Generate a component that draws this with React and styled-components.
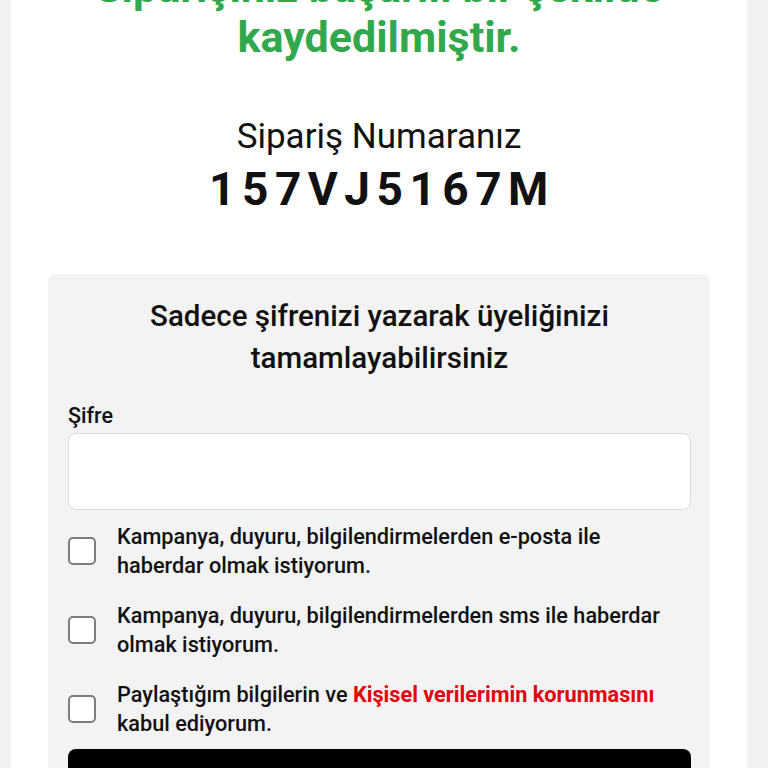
import React, { useState } from 'react';
import styled, { createGlobalStyle } from 'styled-components';

const GlobalStyle = createGlobalStyle`
  * { box-sizing: border-box; }
  body {
    margin: 0;
    background: #f2f2f2;
    font-family: Roboto, "Noto Sans", Arial, sans-serif;
    color: #111;
    overflow: hidden;
  }
`;

const consents = [
  { id: 'mail', text: 'Kampanya, duyuru, bilgilendirmelerden e-posta ile haberdar olmak istiyorum.' },
  { id: 'sms', text: 'Kampanya, duyuru, bilgilendirmelerden sms ile haberdar olmak istiyorum.' },
  { id: 'kvkk', kvkk: true }
];

export default function App() {
  const [checked, setChecked] = useState({});
  const [password, setPassword] = useState('');

  const toggle = (id) => setChecked({ ...checked, [id]: !checked[id] });

  return (
    <>
      <GlobalStyle />
      <Page>
        <Card>
          <SuccessTitle>
            Siparişiniz başarılı bir şekilde
            <br />
            kaydedilmiştir.
          </SuccessTitle>

          <OrderLabel>Sipariş Numaranız</OrderLabel>
          <OrderNumber>157VJ5167M</OrderNumber>

          <Panel>
            <PanelTitle>
              Sadece şifrenizi yazarak üyeliğinizi
              <br />
              tamamlayabilirsiniz
            </PanelTitle>

            <FieldLabel htmlFor="pw">Şifre</FieldLabel>
            <PasswordInput
              id="pw"
              type="password"
              value={password}
              onChange={(ev) => setPassword(ev.target.value)}
            />

            <ConsentList>
              {consents.map((c) => (
                <ConsentRow key={c.id} onClick={() => toggle(c.id)}>
                  <Box $checked={!!checked[c.id]} />
                  <ConsentText>
                    {c.kvkk ? (
                      <>
                        Paylaştığım bilgilerin ve <RedLink>Kişisel verilerimin korunmasını</RedLink> kabul ediyorum.
                      </>
                    ) : c.text}
                  </ConsentText>
                </ConsentRow>
              ))}
            </ConsentList>

            <SubmitButton>Üyeliğimi Tamamla</SubmitButton>
          </Panel>
        </Card>
      </Page>
    </>
  );
}

const Page = styled.div`
  height: 768px;
  padding: 0 21px 0 11px;
  overflow: hidden;
`;

const Card = styled.div`
  background: #fff;
  min-height: 100%;
  display: flex;
  flex-direction: column;
  align-items: center;
  padding-bottom: 40px;
`;

const SuccessTitle = styled.h1`
  margin: -38px 0 0;
  font-size: 43px;
  line-height: 50px;
  font-weight: 700;
  color: #31a84c;
  text-align: center;
  white-space: nowrap;
`;

const OrderLabel = styled.div`
  margin-top: 55px;
  font-size: 35px;
  line-height: 40px;
  font-weight: 400;
  color: #111;
`;

const OrderNumber = styled.div`
  margin-top: 5px;
  font-size: 46px;
  line-height: 54px;
  font-weight: 700;
  letter-spacing: 6.5px;
  color: #111;
  padding-left: 6px;
`;

const Panel = styled.div`
  align-self: stretch;
  margin: 58px 37px 0;
  background: #f3f3f3;
  border-radius: 8px;
  padding: 21px 19px 30px 20px;
  display: flex;
  flex-direction: column;
`;

const PanelTitle = styled.h2`
  margin: 0;
  font-size: 29.5px;
  line-height: 42px;
  font-weight: 500;
  text-align: center;
  color: #111;
`;

const FieldLabel = styled.label`
  margin-top: 25px;
  font-size: 21.5px;
  line-height: 24px;
  font-weight: 500;
  color: #111;
`;

const PasswordInput = styled.input`
  margin-top: 5px;
  height: 77px;
  width: 100%;
  border: 1px solid #dcdcdc;
  border-radius: 8px;
  background: #fff;
  outline: none;
  padding: 0 16px;
  font-size: 20px;
`;

const ConsentList = styled.div`
  margin-top: 12px;
  display: flex;
  flex-direction: column;
  gap: 21px;
`;

const ConsentRow = styled.div`
  display: flex;
  align-items: center;
  gap: 21px;
  cursor: pointer;
`;

const Box = styled.span`
  flex: none;
  width: 28px;
  height: 28px;
  border: 2px solid #7d7d7d;
  border-radius: 5px;
  background: ${(p) => (p.$checked ? '#111' : '#fff')};
`;

const ConsentText = styled.div`
  font-size: 21.7px;
  line-height: 29px;
  font-weight: 500;
  color: #111;
`;

const RedLink = styled.span`
  color: #e3000f;
  font-weight: 700;
`;

const SubmitButton = styled.button`
  margin-top: 11px;
  height: 72px;
  border: none;
  border-radius: 8px;
  background: #000;
  color: #fff;
  font-family: inherit;
  font-size: 22px;
  font-weight: 700;
`;
